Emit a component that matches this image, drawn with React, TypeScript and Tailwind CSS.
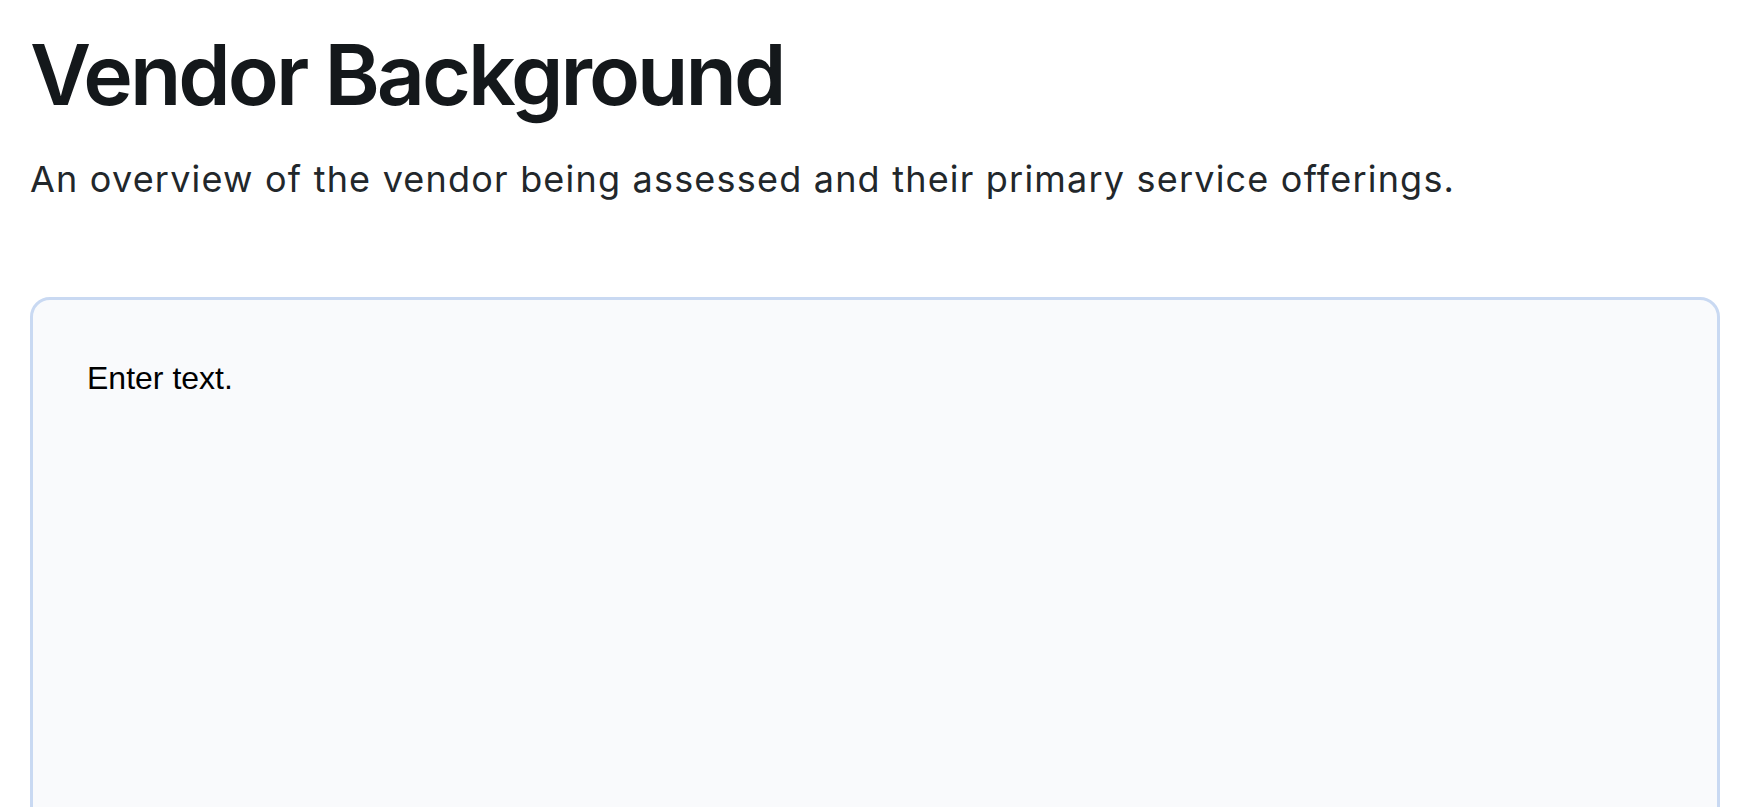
import React from 'react';

// Vendor background section
const App: React.FC = () => {
  return (
    <div className="min-h-screen bg-white px-[30px] pt-[33px]" style={{ fontFamily: 'Inter, "Noto Sans", sans-serif' }}>
      <h1 className="text-[84px] leading-[84px] font-semibold text-[#14181b] tracking-[-3px]">
        Vendor Background
      </h1>
      <p className="mt-[40px] text-[36px] leading-[44px] text-[#22272b] tracking-[1.2px]">
        An overview of the vendor being assessed and their primary service offerings.
      </p>

      <div className="mt-[96px] w-[1690px] h-[600px] rounded-[20px] border-[3px] border-[#c9d9f2] bg-[#f9fafc] pl-[54px] pt-[60px]">
        <p
          className="text-[32px] leading-[37px] text-black"
          style={{ fontFamily: '"Liberation Sans", Arial, sans-serif' }}
        >
          Enter text.
        </p>
      </div>
    </div>
  );
};

export default App;
